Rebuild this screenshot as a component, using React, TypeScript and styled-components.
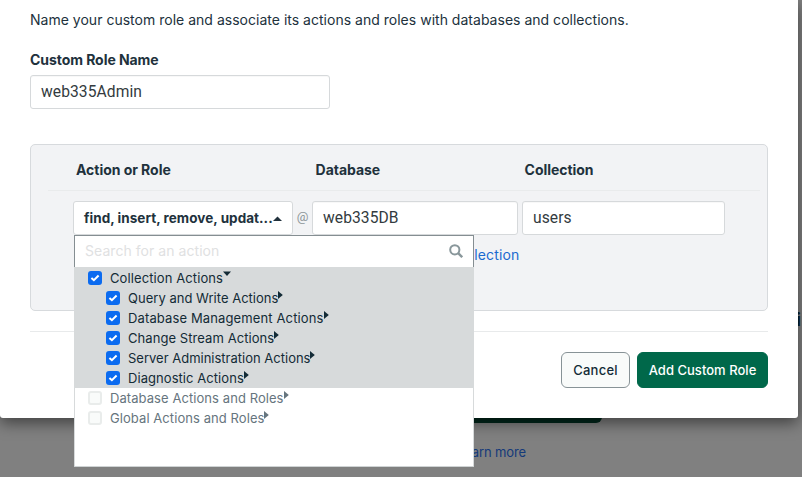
import React from 'react';
import styled, { createGlobalStyle } from 'styled-components';

const GlobalStyle = createGlobalStyle`
  *, *::before, *::after { box-sizing: border-box; }
  body { margin: 0; overflow: hidden; font-family: Inter, "Liberation Sans", sans-serif; color: #21313c; }
`;

const Page = styled.div`
  position: relative;
  width: 802px;
  height: 477px;
  background: #808080;
  overflow: hidden;
  display: flex;
  flex-direction: column;
`;

const PageHeading = styled.div`
  margin-top: 306px;
  height: 28px;
  padding-left: 796px;
  font-size: 18px;
  line-height: 28px;
  font-weight: 700;
  color: #06202e;
  white-space: nowrap;
`;

const PageAction = styled.div`
  margin-top: 53px;
  width: 402px;
  height: 36px;
  margin-left: 200px;
  border-radius: 6px;
  background: #00281c;
`;

const LearnMore = styled.a`
  margin-top: 19px;
  padding-left: 457px;
  font-size: 13px;
  letter-spacing: -0.13px;
  line-height: 20px;
  color: #143a7a;
`;

const Modal = styled.section`
  position: absolute;
  top: 0;
  left: 0;
  width: 798px;
  height: 418px;
  padding: 10px 30px 0;
  background: #fff;
  border-radius: 0 0 3px 3px;
  box-shadow: 0 5px 15px rgba(0, 0, 0, 0.5);
`;

const Description = styled.p`
  margin: 0;
  font-size: 14px;
  line-height: 20px;
  letter-spacing: 0.015px;
  white-space: nowrap;
`;

const Label = styled.label`
  display: block;
  margin-top: 20px;
  font-size: 14px;
  font-weight: 700;
  line-height: 20px;
  letter-spacing: -0.06px;
`;

const Field = styled.div<{ $width: number }>`
  width: ${p => p.$width}px;
  height: 34px;
  flex: none;
  padding: 0 10px;
  border: 1px solid #d6d9db;
  border-radius: 3px;
  background: #fff;
  box-shadow: inset 0 1px 1px rgba(0, 0, 0, 0.03);
  font-family: Roboto, "Liberation Sans", sans-serif;
  font-size: 15.6px;
  line-height: 32px;
  letter-spacing: 0.08px;
  color: #333b40;
`;

const NameField = styled(Field)`
  margin-top: 5px;
`;

const Panel = styled.div`
  margin-top: 35px;
  height: 167px;
  border: 1px solid #d7dadd;
  border-radius: 5px;
  background: #f2f3f5;
`;

const PanelHeader = styled.div`
  display: grid;
  grid-template-columns: 239.6px 209px 1fr;
  height: 46px;
  margin: 0 7px 0 17px;
  padding: 15px 0 0 28px;
  border-bottom: 1px solid #e9ebec;
  font-size: 14px;
  font-weight: 700;
  line-height: 20px;
  letter-spacing: -0.04px;
`;

const FieldRow = styled.div`
  display: flex;
  margin: 10px 0 0 42px;
`;

const ActionPicker = styled.div`
  position: relative;
  width: 220px;
`;

const Trigger = styled.div`
  display: flex;
  align-items: center;
  height: 34px;
  padding-left: 10px;
  border: 1px solid #d6d9db;
  border-radius: 3px;
  background: #fff;
  font-size: 13.5px;
  font-weight: 700;
  letter-spacing: 0.04px;
  white-space: nowrap;
`;

const AtSign = styled.span`
  width: 19px;
  text-align: center;
  font-family: Roboto, sans-serif;
  font-size: 13px;
  line-height: 32px;
  color: #8d9699;
`;

const Scope = styled.div`
  display: flex;
  gap: 4px;
`;

const AddLink = styled.a`
  display: block;
  margin: 10px 0 0 423px;
  font-size: 14px;
  line-height: 20px;
  letter-spacing: 0.15px;
  color: #1b6ad0;
`;

const Menu = styled.div`
  position: absolute;
  z-index: 2;
  top: 34px;
  left: 1px;
  width: 400px;
  height: 232px;
  border-bottom: 1px solid #cfd3d4;
  background: #fff;
`;

const SearchBox = styled.div`
  display: flex;
  align-items: center;
  justify-content: space-between;
  height: 32px;
  padding: 0 10px 2px 10px;
  border: 1px solid #858e92;
  border-bottom: 0;
  background: #fff;
  font-size: 14px;
  letter-spacing: 0.05px;
  color: #dfe1e2;
`;

const ActionList = styled.div<{ $selected?: boolean }>`
  height: ${p => (p.$selected ? '121px' : '78px')};
  padding-top: ${p => (p.$selected ? '1px' : '0')};
  border: solid #d7dadb;
  border-width: 0 1px;
  background: ${p => (p.$selected ? '#d7dadb' : '#fff')};
`;

const ActionRow = styled.div<{ $nested?: boolean; $muted?: boolean }>`
  display: flex;
  align-items: center;
  height: 20px;
  padding-left: ${p => (p.$nested ? 31 : 13)}px;
  font-size: 13px;
  color: ${p => (p.$muted ? '#66757e' : '#132b36')};
  white-space: nowrap;
`;

const ActionName = styled.span<{ $spacing: number }>`
  letter-spacing: ${p => p.$spacing}px;
`;

const Checkbox = styled.span<{ $checked: boolean }>`
  display: flex;
  align-items: center;
  justify-content: center;
  width: 14px;
  height: 14px;
  margin-right: 8px;
  border: ${p => (p.$checked ? '0' : '2px solid #e9eceb')};
  border-radius: 3px;
  background: ${p => (p.$checked ? '#0b6bf0' : '#f9fbfa')};
`;

const Expander = styled.svg`
  display: block;
  margin-bottom: 6px;
`;

const Footer = styled.footer`
  display: flex;
  justify-content: flex-end;
  gap: 7px;
  margin-top: 20px;
  padding-top: 20px;
  border-top: 1px solid #e8eaeb;
`;

const Button = styled.button<{ $primary?: boolean }>`
  width: ${p => (p.$primary ? 131 : 69)}px;
  height: 36px;
  padding: 0;
  border: 1px solid ${p => (p.$primary ? '#00684a' : '#889397')};
  border-radius: 6px;
  background: ${p => (p.$primary ? '#00684a' : '#f9fbfa')};
  color: ${p => (p.$primary ? '#fff' : '#132b36')};
  font-family: inherit;
  font-size: 13px;
  font-weight: 500;
  letter-spacing: ${p => (p.$primary ? 0.03 : 0.25)}px;
  white-space: nowrap;
`;

type Action = { name: string; spacing: number };

const collectionActions: Action[] = [
  { name: 'Query and Write Actions', spacing: 0.02 },
  { name: 'Database Management Actions', spacing: 0.13 },
  { name: 'Change Stream Actions', spacing: 0.07 },
  { name: 'Server Administration Actions', spacing: 0 },
  { name: 'Diagnostic Actions', spacing: 0.06 },
];

const otherActions: Action[] = [
  { name: 'Database Actions and Roles', spacing: 0.07 },
  { name: 'Global Actions and Roles', spacing: 0.07 },
];

function ActionItem({ action, nested, checked, open }: { action: Action; nested?: boolean; checked: boolean; open?: boolean }) {
  return (
    <ActionRow $nested={nested} $muted={!checked}>
      <Checkbox $checked={checked}>
        {checked && (
          <svg width="10" height="8" viewBox="0 0 10 8" fill="none">
            <path d="M1.4 3.9 3.9 6.2 8.6 1.5" stroke="#fff" strokeWidth="2" />
          </svg>
        )}
      </Checkbox>
      <ActionName $spacing={action.spacing}>{action.name}</ActionName>
      <Expander width="8" height="8" viewBox="0 0 8 8" fill="currentColor">
        <path d={open ? 'M0 0.5h8L4 5z' : 'M0 0 4.8 4 0 8z'} />
      </Expander>
    </ActionRow>
  );
}

export default function App() {
  return (
    <>
      <GlobalStyle />
      <Page>
        <PageHeading>i</PageHeading>
        <PageAction />
        <LearnMore>Learn more</LearnMore>
        <Modal>
          <Description>Name your custom role and associate its actions and roles with databases and collections.</Description>
          <Label>Custom Role Name</Label>
          <NameField $width={300}>web335Admin</NameField>
          <Panel>
            <PanelHeader>
              <span>Action or Role</span>
              <span>Database</span>
              <span>Collection</span>
            </PanelHeader>
            <FieldRow>
              <ActionPicker>
                <Trigger>
                  find, insert, remove, updat...
                  <svg width="9" height="5" viewBox="0 0 9 5" fill="#21313c">
                    <path d="M0 5 4.5 0.5 9 5z" />
                  </svg>
                </Trigger>
                <Menu>
                  <SearchBox>
                    Search for an action
                    <svg width="14" height="14" viewBox="0 0 14 14" fill="none" stroke="#89979b" strokeWidth="2">
                      <circle cx="5.8" cy="5.8" r="4.6" />
                      <path d="m9.2 9.2 4 4" strokeWidth="2.4" />
                    </svg>
                  </SearchBox>
                  <ActionList $selected>
                    <ActionItem action={{ name: 'Collection Actions', spacing: 0.1 }} checked open />
                    {collectionActions.map(a => (
                      <ActionItem key={a.name} action={a} nested checked />
                    ))}
                  </ActionList>
                  <ActionList>
                    {otherActions.map(a => (
                      <ActionItem key={a.name} action={a} checked={false} />
                    ))}
                  </ActionList>
                </Menu>
              </ActionPicker>
              <AtSign>@</AtSign>
              <Scope>
                <Field $width={206}>web335DB</Field>
                <Field $width={203}>users</Field>
              </Scope>
            </FieldRow>
            <AddLink>collection</AddLink>
          </Panel>
          <Footer>
            <Button>Cancel</Button>
            <Button $primary>Add Custom Role</Button>
          </Footer>
        </Modal>
      </Page>
    </>
  );
}
